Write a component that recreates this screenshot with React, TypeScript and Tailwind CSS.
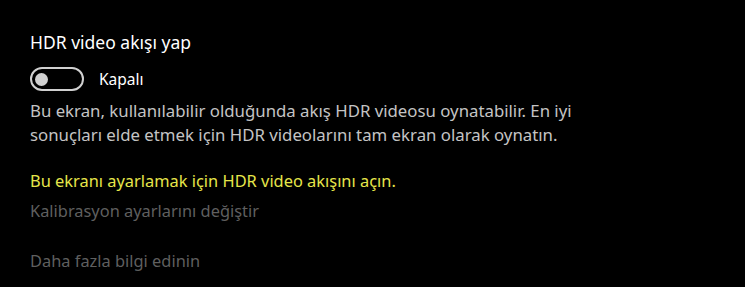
import React, { useState } from "react";

export default function App() {
    const [on, setOn] = useState(false);

    return (
        <div
            className="min-h-[287px] w-full bg-black pl-[30px] pt-[30px] text-white"
            style={{ fontFamily: '"Noto Sans", "Open Sans", sans-serif' }}
        >
            <h2 className="text-[17.5px] leading-[24px] font-normal">HDR video akışı yap</h2>

            <div className="mt-[13px] flex items-center gap-[15px]">
                {/* toggle switch */}
                <button
                    onClick={() => setOn(!on)}
                    className={`flex h-[24px] w-[54px] items-center rounded-full border-2 px-[3px] ${
                        on ? "justify-end border-[#0078d7] bg-[#0078d7]" : "justify-start border-[#d0d0d0] bg-transparent"
                    }`}
                >
                    <span className={`block h-[13px] w-[13px] rounded-full ${on ? "bg-white" : "bg-[#d0d0d0]"}`} />
                </button>
                <span className="text-[15.5px] leading-[22px]">{on ? "Açık" : "Kapalı"}</span>
            </div>

            <p className="mt-[8px] w-[600px] text-[16.8px] leading-[24px] text-[#c4c4c4]">
                Bu ekran, kullanılabilir olduğunda akış HDR videosu oynatabilir. En iyi sonuçları elde etmek için HDR
                videolarını tam ekran olarak oynatın.
            </p>

            <p className="mt-[22px] text-[16.4px] leading-[24px] text-[#e6e64a]">
                Bu ekranı ayarlamak için HDR video akışını açın.
            </p>
            <a className="mt-[6px] block text-[16.4px] leading-[24px] text-[#5f5f5f]">Kalibrasyon ayarlarını değiştir</a>

            <a className="mt-[26px] block text-[16.4px] leading-[24px] text-[#5f5f5f]">Daha fazla bilgi edinin</a>
        </div>
    );
}
